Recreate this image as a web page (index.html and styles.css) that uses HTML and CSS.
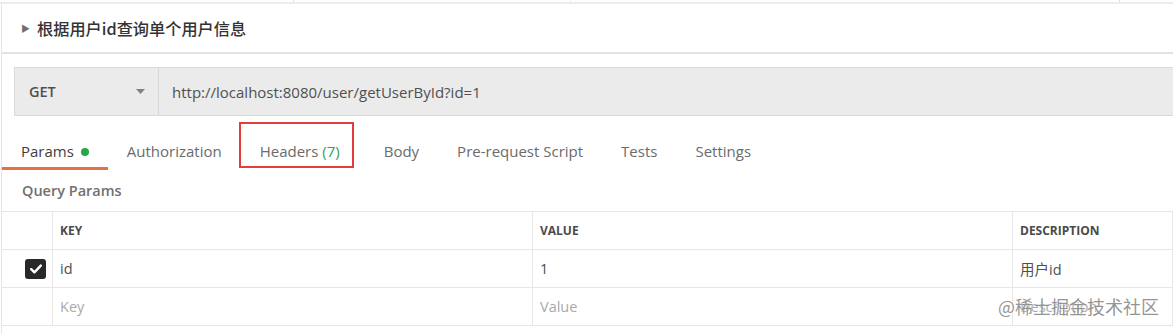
FILE: index.html
```html
<!DOCTYPE html>
<html lang="zh-CN">
<head>
    <meta charset="UTF-8">
    <meta name="viewport" content="width=device-width, initial-scale=1.0">
    <title>根据用户id查询单个用户信息</title>
    <link rel="stylesheet" href="styles.css">
</head>
<body>

    <!-- top tab strip (cut off) -->
    <div class="top-strip">
        <div class="top-tab t1"></div>
        <div class="top-tab t2"></div>
        <div class="top-tab t3"></div>
        <div class="top-tab t4"></div>
    </div>

    <div class="page">
        <!-- request title -->
        <div class="req-title">
            <span class="caret">&#9654;</span>
            <span class="req-name">根据用户id查询单个用户信息</span>
        </div>

        <!-- url bar -->
        <div class="url-bar">
            <div class="method">
                <span>GET</span>
                <svg class="method-caret" width="9" height="5" viewBox="0 0 9 5"><path d="M0 0h9L4.5 5z" fill="#808080"/></svg>
            </div>
            <div class="url">http://localhost:8080/user/getUserById?id=1</div>
        </div>

        <!-- request tabs -->
        <ul class="req-tabs">
            <li class="active">Params <span class="dot"></span></li>
            <li>Authorization</li>
            <li class="marked">Headers <span class="count">(7)</span></li>
            <li>Body</li>
            <li>Pre-request Script</li>
            <li>Tests</li>
            <li>Settings</li>
        </ul>

        <div class="section-label">Query Params</div>

        <!-- params table -->
        <div class="params">
            <div class="cell head"></div>
            <div class="cell head">KEY</div>
            <div class="cell head">VALUE</div>
            <div class="cell head">DESCRIPTION</div>

            <div class="cell check-cell">
                <span class="checkbox">
                    <svg width="12" height="10" viewBox="0 0 12 10"><path d="M1.2 5.2l3.2 3.1L10.8 1.6" fill="none" stroke="#fff" stroke-width="2.4" stroke-linecap="round" stroke-linejoin="round"/></svg>
                </span>
            </div>
            <div class="cell">id</div>
            <div class="cell">1</div>
            <div class="cell">用户id</div>

            <div class="cell"></div>
            <div class="cell placeholder">Key</div>
            <div class="cell placeholder">Value</div>
            <div class="cell placeholder">Description</div>
        </div>

        <div class="watermark">@稀土掘金技术社区</div>
    </div>

</body>
</html>
```

FILE: styles.css
```css
/* Base */
body {
    margin: 0;
    padding: 0;
    background: #fff;
    font-family: "Open Sans", "Noto Sans CJK SC", sans-serif;
    color: #505050;
    overflow: hidden;
}

/* Top strip */
.top-strip {
    display: flex;
    height: 2px;
    border-bottom: 2px solid #ececec;
}

.top-tab {
    border-right: 1px solid #dcdcdc;
}

.t1 { width: 293px; }
.t2 { width: 276px; border-right: 1px solid #f0f0f0; }
.t3 { width: 548px; }
.t4 { flex: 1; border-right: none; }

.page {
    position: relative;
    border-left: 1px solid #e6e6e6;
    margin-left: 1px;
    height: 330px;
}

/* Title */
.req-title {
    display: flex;
    align-items: center;
    height: 48px;
    padding-left: 19px;
    border-bottom: 2px solid #e3e3e3;
}

.caret {
    font-size: 9px;
    color: #707070;
    margin-right: 7px;
}

.req-name {
    font-family: "Noto Sans CJK SC", sans-serif;
    font-size: 16.2px;
    font-weight: 500;
    color: #333;
}

/* URL bar */
.url-bar {
    display: flex;
    height: 49px;
    margin: 13px 0 0 12px;
    background: #ebebeb;
    border: 1px solid #dadada;
    border-right: none;
    box-sizing: border-box;
}

.method {
    display: flex;
    align-items: center;
    justify-content: space-between;
    width: 144px;
    padding: 0 13px 0 14px;
    box-sizing: border-box;
    border-right: 1px solid #d6d6d6;
    font-size: 14.5px;
    font-weight: 600;
    color: #505050;
}

.url {
    display: flex;
    align-items: center;
    padding-left: 13px;
    font-size: 15px;
    color: #505050;
}

/* Tabs */
.req-tabs {
    list-style: none;
    display: flex;
    margin: 9px 0 0 0;
    padding: 0;
}

.req-tabs li {
    position: relative;
    height: 45px;
    box-sizing: border-box;
    padding: 14.5px 19px 0;
    line-height: 22px;
    font-size: 15px;
    color: #6b6b6b;
    border-bottom: 3px solid transparent;
}

.req-tabs li.active {
    color: #404040;
    border-bottom-color: #e8703e;
}

.dot {
    display: inline-block;
    width: 8px;
    height: 8px;
    border-radius: 50%;
    background: #26a748;
    margin-left: 3px;
    vertical-align: 1px;
}

.count {
    color: #3a9d55;
}

.req-tabs li.marked {
    margin-right: 6px;
}

.req-tabs li.marked::after {
    content: "";
    position: absolute;
    left: -2px;
    right: 5px;
    top: -3px;
    bottom: -1px;
    border: 2px solid #e33c3c;
}

.section-label {
    height: 41px;
    line-height: 42px;
    padding-left: 20px;
    font-size: 14.5px;
    font-weight: 600;
    color: #707070;
}

/* Params table */
.params {
    display: grid;
    grid-template-columns: 51px 480px 480px 1fr;
    grid-auto-rows: 38px;
    border-top: 1px solid #e6e6e6;
}

.cell {
    display: flex;
    align-items: center;
    padding-left: 7px;
    border-right: 1px solid #e6e6e6;
    border-bottom: 1px solid #e6e6e6;
    font-size: 14.5px;
    color: #505050;
    font-family: "Open Sans", "Noto Sans CJK SC", sans-serif;
}

.cell.head {
    font-size: 12px;
    font-weight: 700;
    color: #4a4a4a;
}

.cell.placeholder {
    color: #a9a9a9;
}

.check-cell {
    justify-content: flex-end;
    padding: 0 6px 0 0;
}

.checkbox {
    display: flex;
    align-items: center;
    justify-content: center;
    width: 21px;
    height: 20px;
    border-radius: 3px;
    background: #282828;
}

/* Watermark overlay */
.watermark {
    position: absolute;
    right: 14px;
    top: 289px;
    font-family: "Noto Sans CJK SC", sans-serif;
    font-size: 18px;
    color: rgba(130, 130, 130, 0.85);
    text-shadow: 0 0 2px #fff;
}
```
